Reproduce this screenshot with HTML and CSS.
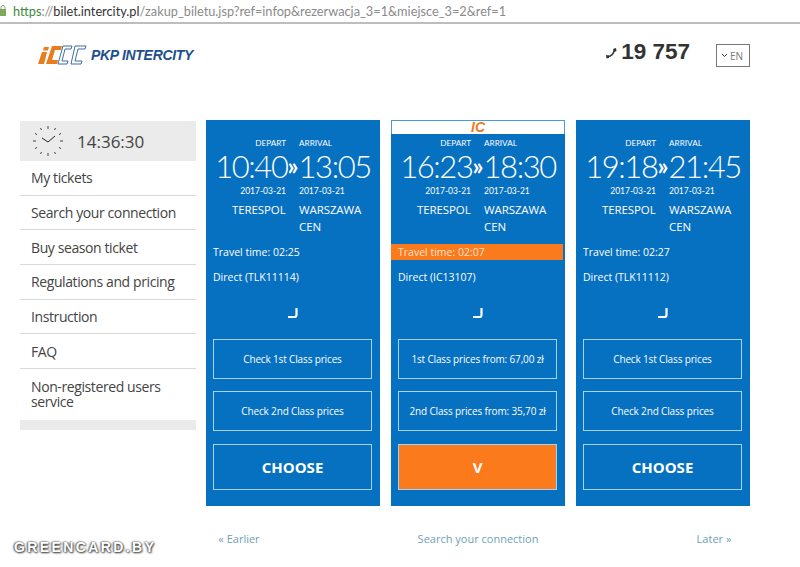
FILE: index.html
```html
<!DOCTYPE html>
<html lang="en">
<head>
    <meta charset="UTF-8">
    <meta name="viewport" content="width=device-width, initial-scale=1.0">
    <title>PKP Intercity | Tickets</title>
    <link rel="stylesheet" href="styles.css">
</head>
<body>
    <div class="url-bar">
        <svg class="url-lock" width="7" height="11" viewBox="0 0 7 11"><rect x="0" y="4" width="6" height="7" fill="#7fa85a"/><path d="M1 4V2.500a2 2 0 0 1 4 0V4" fill="none" stroke="#8a9a7a"/></svg>
        <span class="url-scheme">https</span><span class="url-rest">://</span><span class="url-host">bilet.intercity.pl</span><span class="url-rest">/zakup_biletu.jsp?ref=infop&amp;rezerwacja_3=1&amp;miejsce_3=2&amp;ref=1</span>
    </div>

    <header class="top">
        <div class="logo">
            <svg width="50" height="22" viewBox="0 0 50 22">
                <path d="M5 8h5L7 20H1z" fill="#e87c1e"/>
                <path d="M7 3h5l-1 3.500H6z" fill="#e87c1e"/>
                <path d="M15 2h10l-1 4h-6l-3 10h6l-1 4h-11z" fill="#e87c1e"/>
                <path d="M26 2h9l-1 3h-6l-3 12h6l-1 3h-9z" fill="#fff" stroke="#3f6da5" stroke-width="1"/>
                <path d="M38 2h11l-1 3h-7l-3 12h7l-1 3H34z" fill="#fff" stroke="#3f6da5" stroke-width="1"/>
            </svg>
            <span class="logo-name">PKP INTERCITY</span>
        </div>
        <div class="phone">
            <svg width="13" height="13" viewBox="0 0 13 13"><path d="M3 10.500c3 0 5.500-2.500 6.500-7" fill="none" stroke="#333" stroke-width="1.500"/><path d="M8 3l3-1 .5 3-2 1zM1 9l3 .5v2.500l-2.500.5z" fill="#333"/></svg>
            <span>19 757</span>
        </div>
        <div class="lang"><svg width="7" height="5" viewBox="0 0 7 5"><path d="M1 1l2.500 2.500L6 1" fill="none" stroke="#333"/></svg>EN</div>
    </header>

    <main class="content">
        <nav class="side">
            <div class="clock">
                <svg width="32" height="32" viewBox="0 0 32 32">
                    <g stroke="#444" stroke-width="1">
                        <path d="M16 1v3M16 28v3M1 16h3M28 16h3M8.500 3l1 2M23.500 3l-1 2M3 8.500l2 1M29 8.500l-2 1M3 23.500l2-1M29 23.500l-2-1M8.500 29l1-2M23.500 29l-1-2"/>
                    </g>
                    <path d="M10 13l6 4 7-6" fill="none" stroke="#222" stroke-width="1"/>
                </svg>
                <span>14:36:30</span>
            </div>
            <a class="side-item" href="#">My tickets</a>
            <a class="side-item" href="#">Search your connection</a>
            <a class="side-item" href="#">Buy season ticket</a>
            <a class="side-item" href="#">Regulations and pricing</a>
            <a class="side-item" href="#">Instruction</a>
            <a class="side-item" href="#">FAQ</a>
            <a class="side-item side-item-long" href="#">Non-registered users service</a>
            <div class="side-foot"></div>
        </nav>

        <div class="results">
            <section class="card">
                <div class="card-top"></div>
                <div class="labels"><span>DEPART</span><span>ARRIVAL</span></div>
                <div class="times">10:40<b>»</b>13:05</div>
                <div class="dates"><span>2017-03-21</span><span>2017-03-21</span></div>
                <div class="stations"><span>TERESPOL</span><span>WARSZAWA CEN</span></div>
                <div class="travel">Travel time: 02:25</div>
                <div class="direct">Direct (TLK11114)</div>
                <svg class="corner" width="10" height="12" viewBox="0 0 10 12"><path d="M8.500 1v7q0 2-2 2H0" fill="none" stroke="#fff" stroke-width="2.200"/></svg>
                <button class="price">Check 1st Class prices</button>
                <button class="price">Check 2nd Class prices</button>
                <button class="choose">CHOOSE</button>
            </section>

            <section class="card">
                <div class="card-top card-top-ic"><i>IC</i></div>
                <div class="labels"><span>DEPART</span><span>ARRIVAL</span></div>
                <div class="times">16:23<b>»</b>18:30</div>
                <div class="dates"><span>2017-03-21</span><span>2017-03-21</span></div>
                <div class="stations"><span>TERESPOL</span><span>WARSZAWA CEN</span></div>
                <div class="travel travel-best">Travel time: 02:07</div>
                <div class="direct">Direct (IC13107)</div>
                <svg class="corner" width="10" height="12" viewBox="0 0 10 12"><path d="M8.500 1v7q0 2-2 2H0" fill="none" stroke="#fff" stroke-width="2.200"/></svg>
                <button class="price">1st Class prices from: 67,00 zł</button>
                <button class="price">2nd Class prices from: 35,70 zł</button>
                <button class="choose choose-active">V</button>
            </section>

            <section class="card">
                <div class="card-top"></div>
                <div class="labels"><span>DEPART</span><span>ARRIVAL</span></div>
                <div class="times">19:18<b>»</b>21:45</div>
                <div class="dates"><span>2017-03-21</span><span>2017-03-21</span></div>
                <div class="stations"><span>TERESPOL</span><span>WARSZAWA CEN</span></div>
                <div class="travel">Travel time: 02:27</div>
                <div class="direct">Direct (TLK11112)</div>
                <svg class="corner" width="10" height="12" viewBox="0 0 10 12"><path d="M8.500 1v7q0 2-2 2H0" fill="none" stroke="#fff" stroke-width="2.200"/></svg>
                <button class="price">Check 1st Class prices</button>
                <button class="price">Check 2nd Class prices</button>
                <button class="choose">CHOOSE</button>
            </section>
        </div>
    </main>

    <footer class="pager">
        <a href="#">« Earlier</a>
        <a href="#">Search your connection</a>
        <a href="#">Later »</a>
    </footer>

    <div class="watermark">GREENCARD.BY</div>
</body>
</html>
```

FILE: styles.css
```css
:root {
    --blue: #0670c1;
    --orange: #fb7a1c;
    --text: #444;
    --line: #d9d9d9;
    --link: #6f9fb8;
}

* {
    margin: 0;
    padding: 0;
    box-sizing: border-box;
}

html, body {
    height: 567px;
    overflow: hidden;
}

body {
    position: relative;
    background: #fff;
    color: var(--text);
    font-family: 'Open Sans', 'Noto Sans', sans-serif;
}

a {
    color: inherit;
    text-decoration: none;
}

/* address bar of the browser */
.url-bar {
    display: flex;
    align-items: center;
    height: 24px;
    padding-bottom: 1px;
    border-bottom: 2px solid #bdbdbd;
    background: #fff;
    font-family: 'Lato', sans-serif;
    font-size: 12.750px;
    white-space: nowrap;
}

.url-lock {
    margin-right: 6px;
}

.url-scheme {
    color: #3c8a3c;
}

.url-rest {
    color: #8a8a8a;
}

.url-host {
    color: #333;
}

/* logo, phone, language */
.top {
    display: flex;
    align-items: flex-start;
    height: 96px;
    padding: 20px 50px 0 37px;
}

.logo {
    display: flex;
    align-items: center;
    gap: 4px;
    height: 22px;
}

.logo-name {
    color: #1d4f8c;
    font-family: 'Liberation Sans', sans-serif;
    font-size: 14px;
    font-style: italic;
    font-weight: 700;
    letter-spacing: -0.3px;
}

.phone {
    display: flex;
    align-items: center;
    gap: 3px;
    margin-left: auto;
    height: 24px;
    margin-top: -4px;
    color: #333;
    font-family: 'Liberation Sans', sans-serif;
    font-size: 22.500px;
    font-weight: 700;
}

.lang {
    display: flex;
    align-items: center;
    gap: 2px;
    width: 34px;
    height: 23px;
    margin-left: 26px;
    padding-left: 4px;
    border: 1px solid #777;
    color: #777;
    font-size: 10px;
}

/* main columns */
.content {
    display: flex;
    gap: 10px;
    padding-left: 20px;
}

.side {
    width: 176px;
    padding-top: 1px;
}

.clock {
    display: flex;
    align-items: center;
    gap: 13px;
    height: 40px;
    padding-left: 12px;
    background: #ebebeb;
    font-size: 17px;
}

.side-item {
    display: flex;
    align-items: center;
    height: 34.700px;
    padding-left: 11px;
    border-bottom: 1px solid var(--line);
    font-size: 14px;
    letter-spacing: -0.4px;
}

.side-item-long {
    height: 51px;
    padding-bottom: 2px;
    border-bottom: 0;
    line-height: 15px;
}

.side-foot {
    height: 10px;
    background: #ebebeb;
}

.results {
    display: flex;
    gap: 11px;
}

.card {
    display: flex;
    flex-direction: column;
    width: 174px;
    height: 386px;
    background: var(--blue);
    color: #fff;
}

.card-top {
    height: 14px;
}

.card-top-ic {
    border: 1px solid #4a9ad4;
    border-bottom: 0;
    background: #fff;
    color: #e87c1e;
    font-family: 'Liberation Sans', sans-serif;
    font-size: 14px;
    font-weight: 700;
    line-height: 13px;
    text-align: center;
}

.labels,
.dates,
.stations {
    display: grid;
    grid-template-columns: 80px 80px;
    column-gap: 13px;
}

.labels span:first-child,
.dates span:first-child {
    text-align: right;
}

.labels {
    height: 12px;
    margin-top: 3px;
    margin-bottom: 2px;
    font-family: 'Lato', sans-serif;
    font-size: 8.200px;
    line-height: 12px;
}

.times {
    display: flex;
    justify-content: center;
    align-items: center;
    height: 30px;
    font-family: 'Lato', sans-serif;
    font-size: 31px;
    font-weight: 300;
    letter-spacing: -1.400px;
    line-height: 30px;
}

.times b {
    font-size: 24px;
    font-weight: 700;
    letter-spacing: 0;
}

.dates {
    height: 18px;
    margin-top: 1px;
    font-family: 'Lato', sans-serif;
    font-size: 8.500px;
    line-height: 18px;
}

.stations {
    height: 43px;
    margin-top: 1px;
    font-size: 11.500px;
    letter-spacing: -0.1px;
    line-height: 17px;
}

.stations span:first-child {
    padding-left: 26px;
}

.travel {
    height: 16px;
    margin-right: 2px;
    padding-left: 7px;
    font-size: 10.500px;
    line-height: 16px;
}

.travel-best {
    background: var(--orange);
    color: #f6e3d3;
}

.direct {
    height: 16px;
    margin-top: 9px;
    padding-left: 7px;
    font-size: 10.500px;
    line-height: 16px;
}

.corner {
    align-self: center;
    margin-top: 22px;
}

.price,
.choose {
    width: 159px;
    margin-left: 7px;
    border: 1px solid #a9d2ee;
    background: none;
    color: #fff;
    font-family: inherit;
}

.price {
    height: 40px;
    margin-top: 12px;
    font-size: 10px;
    letter-spacing: -0.15px;
}

.corner + .price {
    margin-top: 20px;
}

.choose {
    height: 46px;
    margin-top: 13px;
    font-size: 15px;
    font-weight: 700;
}

.choose-active {
    background: var(--orange);
}

.pager {
    display: grid;
    grid-template-columns: 174px 174px 174px;
    column-gap: 11px;
    margin-left: 206px;
    padding-top: 25px;
    color: var(--link);
    font-size: 11px;
    text-align: center;
}

.pager a:first-child {
    padding-right: 108px;
}

.pager a:last-child {
    padding-left: 102px;
}

/* site stamp on top of the screenshot */
.watermark {
    position: absolute;
    left: 14px;
    top: 539px;
    color: #fff;
    font-family: 'Liberation Sans', sans-serif;
    font-size: 14px;
    font-weight: 700;
    letter-spacing: 2.400px;
    text-shadow: 0 0 2px #444, 1px 1px 2px #444, -1px 0 2px #777;
}
```
